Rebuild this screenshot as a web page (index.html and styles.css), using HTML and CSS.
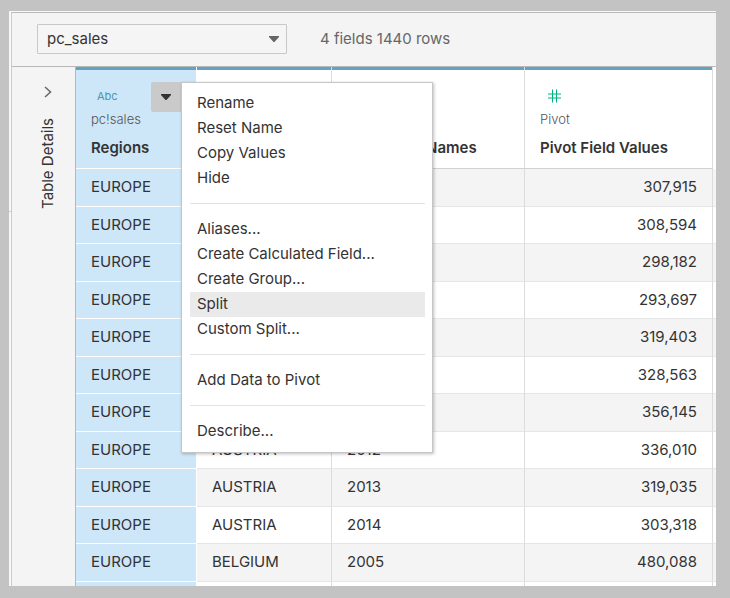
FILE: index.html
```html
<!DOCTYPE html>
<html lang="en">
<head>
<meta charset="utf-8">
<title>pc_sales</title>
<link rel="stylesheet" href="styles.css">
</head>
<body>
<main class="window">
  <div class="pane">
    <header class="toolbar">
      <div class="picker">
        <select class="picker-select" aria-label="Table"><option>pc_sales</option></select>
        <svg class="picker-arrow" viewBox="0 0 10 6" aria-hidden="true"><path d="M0 0h10v1L5.500 6h-1L0 1z"/></svg>
      </div>
      <span class="summary">4 fields 1440 rows</span>
    </header>
    <div class="content">
      <aside class="details">
        <button class="expand" type="button" aria-label="Expand table details">
          <svg viewBox="0 0 8 12" aria-hidden="true"><path d="M1 1l5.500 5L1 11"/></svg>
        </button>
        <span class="details-label">Table Details</span>
      </aside>
      <div class="grid-wrap">
        <table class="grid">
          <colgroup><col class="col-region"><col class="col-country"><col class="col-names"><col class="col-values"><col></colgroup>
          <thead>
            <tr>
              <th class="selected" scope="col">
                <span class="type type-text">Abc</span>
                <span class="source">pc!sales</span>
                <span class="name">Regions</span>
                <button class="menu-button" type="button" aria-label="Regions options"><svg viewBox="0 0 10 6" aria-hidden="true"><path d="M0 0h10v1L5.500 6h-1L0 1z"/></svg></button>
                <div class="menu" role="menu">
                  <button type="button" role="menuitem">Rename</button>
                  <button type="button" role="menuitem">Reset Name</button>
                  <button type="button" role="menuitem">Copy Values</button>
                  <button type="button" role="menuitem">Hide</button>
                  <hr>
                  <button type="button" role="menuitem">Aliases...</button>
                  <button type="button" role="menuitem">Create Calculated Field...</button>
                  <button type="button" role="menuitem">Create Group...</button>
                  <button type="button" role="menuitem" class="active">Split</button>
                  <button type="button" role="menuitem">Custom Split...</button>
                  <hr>
                  <button type="button" role="menuitem">Add Data to Pivot</button>
                  <hr>
                  <button type="button" role="menuitem">Describe...</button>
                </div>
              </th>
              <th scope="col"></th>
              <th scope="col"><span class="type"></span><span class="source">Pivot</span><span class="name">Pivot Field Names</span></th>
              <th scope="col">
                <span class="type"><svg class="hash" viewBox="0 0 13 13" aria-hidden="true"><path d="M4.500 0v13M8.500 0v13M0 4.500h13M0 8.500h13"/></svg></span>
                <span class="source">Pivot</span>
                <span class="name">Pivot Field Values</span>
              </th>
              <td class="filler"></td>
            </tr>
          </thead>
          <tbody>
            <tr><td>EUROPE</td><td></td><td></td><td>307,915</td><td></td></tr>
            <tr><td>EUROPE</td><td></td><td></td><td>308,594</td><td></td></tr>
            <tr><td>EUROPE</td><td></td><td></td><td>298,182</td><td></td></tr>
            <tr><td>EUROPE</td><td></td><td></td><td>293,697</td><td></td></tr>
            <tr><td>EUROPE</td><td></td><td></td><td>319,403</td><td></td></tr>
            <tr><td>EUROPE</td><td></td><td></td><td>328,563</td><td></td></tr>
            <tr><td>EUROPE</td><td></td><td></td><td>356,145</td><td></td></tr>
            <tr><td>EUROPE</td><td>AUSTRIA</td><td>2012</td><td>336,010</td><td></td></tr>
            <tr><td>EUROPE</td><td>AUSTRIA</td><td>2013</td><td>319,035</td><td></td></tr>
            <tr><td>EUROPE</td><td>AUSTRIA</td><td>2014</td><td>303,318</td><td></td></tr>
            <tr><td>EUROPE</td><td>BELGIUM</td><td>2005</td><td>480,088</td><td></td></tr>
            <tr><td></td><td></td><td></td><td></td><td></td></tr>
          </tbody>
        </table>
      </div>
    </div>
  </div>
</main>
</body>
</html>
```
FILE: styles.css
```css
* { box-sizing: border-box; }

body {
  margin: 0;
  height: 100vh;
  padding: 11px 14px 12px 9px;
  background: #c3c3c3;
  color: #333;
  font: 15px/20px Inter, "Liberation Sans", sans-serif;
  overflow: hidden;
}

button, select { font: inherit; color: inherit; }

.window {
  height: 100%;
  padding: 1px 0 0 2px;
  background: linear-gradient(#ccc, #ccc) 0 200px / 2px 1px no-repeat #f8f8f8;
}

.pane {
  height: 100%;
  display: flex;
  flex-direction: column;
  border-top: 1px solid #bbb;
  border-left: 1px solid #ccc;
  background: #f4f4f4;
  overflow: hidden;
}

.toolbar {
  flex: none;
  display: flex;
  align-items: center;
  gap: 33px;
  height: 54px;
  padding: 0 25px 2px;
  border-bottom: 1px solid #b8b8b8;
}

.picker { position: relative; width: 250px; height: 30px; }

.picker-select {
  appearance: none;
  width: 100%;
  height: 100%;
  padding: 0 30px 0 9px;
  border: 1px solid #c8c8c8;
  border-radius: 1px;
  background: #f5f5f5;
}

.picker-arrow {
  position: absolute;
  right: 8px;
  top: 12px;
  width: 10px;
  height: 6px;
  fill: #666;
  pointer-events: none;
}

.summary { color: #666; }

.content { flex: 1; min-height: 0; display: flex; }

.details {
  flex: none;
  width: 64px;
  display: flex;
  flex-direction: column;
  align-items: center;
  gap: 14px;
  padding: 13px 0 0 9px;
  border-right: 1px solid #b8b8b8;
}

.expand {
  width: 24px;
  height: 24px;
  padding: 0;
  border: 0;
  background: none;
  display: grid;
  place-items: center;
}

.expand svg { width: 8px; height: 12px; fill: none; stroke: #666; stroke-width: 1.5; }

.details-label { writing-mode: vertical-rl; transform: rotate(180deg); white-space: nowrap; }

.grid-wrap { flex: 1; min-width: 0; background: #fff; }

.grid {
  width: 100%;
  table-layout: fixed;
  border-collapse: separate;
  border-spacing: 0;
}

.col-region { width: 121px; }
.col-country { width: 135px; }
.col-names { width: 193px; }
.col-values { width: 188px; }

th {
  position: relative;
  height: 102px;
  padding: 18px 15px 0;
  border-right: 1px solid #dcdcdc;
  border-bottom: 1px solid #d0d0d0;
  background: linear-gradient(#62a3c4, #62a3c4) 0 0 / 100% 3px no-repeat #fff;
  background-clip: padding-box;
  text-align: left;
  vertical-align: top;
  font-weight: 400;
  white-space: nowrap;
}

th.selected {
  z-index: 1;
  background-color: #cde6f8;
  border-color: #fff;
}

th > span { display: block; }

.type { height: 22px; padding-left: 8px; }
.type-text { padding-left: 6px; font-size: 11px; line-height: 22px; color: #4996b2; }
.hash { display: block; width: 13px; height: 22px; fill: none; stroke: #00b180; }
.source { font-size: 13px; line-height: 24px; font-weight: 300; color: #555; }
.name { line-height: 34px; font-weight: 600; }

td {
  height: 38px;
  padding: 0 15px 1px;
  border-right: 1px solid #dcdcdc;
  border-bottom: 1px solid #e6e6e6;
}

tbody tr:nth-child(even) td { height: 37px; }
tbody tr:nth-child(odd) td { background: #f4f4f4; }
tbody tr td:first-child { background: #cde6f8; border-color: #fff; }
tbody td:nth-child(4) { text-align: right; }
td:last-child { padding: 0; border-right: 0; }
.filler { border-bottom-color: #fff; }

.menu-button {
  position: absolute;
  top: 15px;
  right: 15px;
  width: 30px;
  height: 30px;
  padding: 0;
  border: 0;
  border-radius: 2px 0 0 2px;
  background: #cacaca;
  display: grid;
  place-items: center;
}

.menu-button svg { width: 10px; height: 6px; fill: #333; }

.menu {
  position: absolute;
  top: 15px;
  left: 105px;
  width: 252px;
  padding: 8px 7px 8px 8px;
  border: 1px solid #c6c6c6;
  background: #fff;
  box-shadow: 1px 1px 3px rgba(0, 0, 0, .25);
}

.menu button {
  display: block;
  width: 100%;
  height: 25px;
  padding: 0 7px 2px;
  border: 0;
  background: none;
  text-align: left;
}

.menu .active { background: #eaeaea; }

.menu hr { height: 1px; margin: 12px 0 13px; border: 0; background: #e2e2e2; }
```
